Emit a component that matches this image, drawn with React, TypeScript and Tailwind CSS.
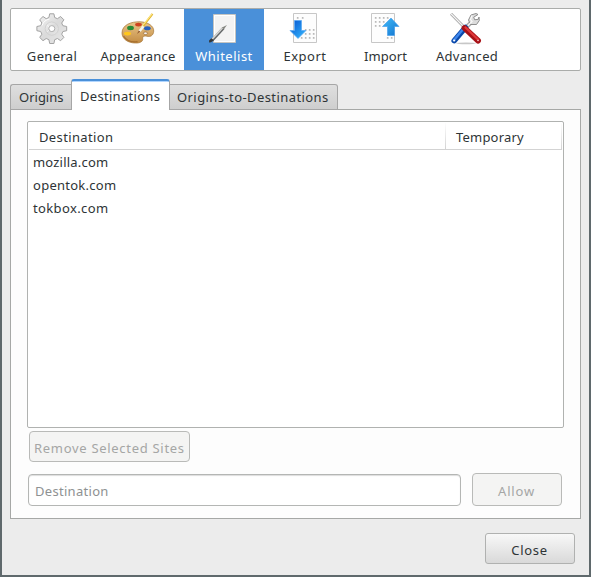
import type { ReactNode } from "react";

function GearIcon() {
  return (
    <svg className="-ml-px" width="32" height="32" viewBox="0 0 32 32">
      <defs>
        <linearGradient id="gear" x1="0" y1="0" x2="1" y2="1">
          <stop offset="0" stopColor="#f4f4f4" />
          <stop offset=".5" stopColor="#dadada" />
          <stop offset="1" stopColor="#e9e9e9" />
        </linearGradient>
      </defs>
      <g stroke="#a3a3a3" strokeWidth="1" fill="url(#gear)">
        <path
          strokeLinejoin="round"
          d="M13.7 .8h4.200l.8 3.700 2.700 1.200 3.200-2.200 3.300 3.300-2.200 3.200 1.200 2.700 3.800.8v4.200l-3.800.8-1.200 2.700 2.200 3.200-3.300 3.300-3.200-2.200-2.700 1.200-.8 3.800h-4.200l-.8-3.800-2.700-1.200-3.200 2.200-3.300-3.300 2.200-3.200-1.200-2.700-3.800-.8v-4.200l3.800-.8 1.200-2.700-2.200-3.200L7 3.500l3.200 2.200 2.700-1.200z"
        />
        <circle cx="15.800" cy="15.600" r="6.600" stroke="#cdcdcd" strokeWidth=".8" />
        <circle cx="15.800" cy="15.600" r="3" fill="#fff" stroke="#b0b0b0" />
      </g>
      <path d="M6 12.500q2-5.500 7.500-6.500M11.500 18.500l1.200-1M11.500 12.500l1.200 1" stroke="#fff" fill="none" />
    </svg>
  );
}

function PaletteIcon() {
  return (
    <svg width="34" height="32" viewBox="0 0 34 32">
      <defs>
        <linearGradient id="wood" x1="0" y1="0" x2="0" y2="1">
          <stop offset="0" stopColor="#e9c58a" />
          <stop offset="1" stopColor="#c38c43" />
        </linearGradient>
      </defs>
      <path
        d="M1 20C1 12 10 8.500 19 8.800c8 .2 14 4.200 13.700 9.400-.2 4-3 6-6.700 5-2.800-.7-4.800 0-4.300 2.300.5 3-2.700 4.700-7.200 4.500C7 30 1 26 1 20z"
        fill="url(#wood)"
        stroke="#a37131"
        strokeWidth=".7"
      />
      <path d="M2.500 23c3 4.500 8 6.500 14 5.500" stroke="#a56e2d" strokeWidth="1.200" fill="none" />
      <ellipse cx="17.500" cy="11.600" rx="3.400" ry="1.900" fill="#cf4220" />
      <ellipse cx="9.500" cy="15" rx="3.400" ry="2.200" fill="#268b34" />
      <ellipse cx="6.500" cy="20.600" rx="3.600" ry="1.900" fill="#ffc61c" />
      <ellipse cx="26.300" cy="15.200" rx="3.400" ry="2" fill="#285fbd" />
      <ellipse cx="24.500" cy="20.200" rx="2.200" ry="1.200" fill="#fff" stroke="#946127" strokeWidth=".7" />
      <path d="M21 14.500L31.500.8" stroke="#dfb22b" strokeWidth="2" />
      <path d="M20.500 14L31 .8" stroke="#ffe985" strokeWidth="1.100" />
      <path d="M21.500 12.500l2 1.600-4 5-2-1.500z" fill="#f3f3ed" />
      <path d="M17.800 17.400l1.500 1.200-3.300 2.400z" fill="#8f5932" />
    </svg>
  );
}

function WhitelistIcon() {
  return (
    <svg width="32" height="32" viewBox="0 0 32 32">
      <path d="M5.500 1.500h22v28h-22z" fill="#f3f3f3" stroke="#c5c5c2" />
      <path d="M6.500 2.500h20v26h-20z" fill="none" stroke="#fff" />
      <path d="M4 27.500L15.500 15" stroke="#626667" strokeWidth="2.800" />
      <path d="M3.800 26.500L15 14.500" stroke="#d5d5d3" strokeWidth="1.600" />
      <path d="M14 14.500l5-2.500-3.300 4.500z" fill="#858681" />
      <path d="M1 29.500l.2-2.200 2.300-2 2.300 2-2.800 2z" fill="#34383b" />
    </svg>
  );
}

const exportDots = [
  [8, 4], [13, 4],
  [8, 8],
  [16, 16], [20, 16], [24, 16],
  [16, 20], [20, 20], [24, 20],
  [12, 24], [16, 24], [20, 24], [24, 24],
];
const importDots = [
  [5, 4], [9, 4], [13, 4], [17, 4],
  [5, 8], [9, 8], [13, 8],
  [5, 12], [9, 12],
  [17, 24], [21, 24],
];

function TransferIcon({ down = false }: { down?: boolean }) {
  const left = down ? 4.5 : 1.5;
  return (
    <svg width="32" height="32" viewBox="0 0 32 32">
      <defs>
        <linearGradient id={down ? "blueDown" : "blueUp"} x1="0" y1="0" x2="1" y2="1">
          <stop offset="0" stopColor={down ? "#0753cf" : "#41bdf9"} />
          <stop offset="1" stopColor={down ? "#35bcff" : "#1273cf"} />
        </linearGradient>
      </defs>
      <path d={`M${left} .5h23v29h-23z`} fill="#fdfdfd" stroke="#c7c7c7" />
      {(down ? exportDots : importDots).map(([x, y]) => (
        <rect key={`${x}-${y}`} x={x - 0.2} y={y} width="1.800" height="1.800" rx=".6" fill="#b8b8b8" />
      ))}
      {down ? (
        <path d="M5.500 7.500h7v10h4.500L9 25.500 1 17.500h4.500z" fill="url(#blueDown)" stroke="#58a8f3" strokeWidth=".7" />
      ) : (
        <path d="M17.500 22.500V13.500h-5L21 5l8 8.500h-4.500v9z" fill="url(#blueUp)" stroke="#4aa0ed" strokeWidth=".7" />
      )}
    </svg>
  );
}

function ToolsIcon() {
  return (
    <svg className="-ml-[2px]" width="32" height="32" viewBox="0 0 32 32">
      <ellipse cx="16" cy="30.300" rx="10" ry=".9" fill="#c7c7c7" />
      <path d="M1 .8L15 15" stroke="#999" strokeWidth="2.700" />
      <path d="M1 .8L15 15" stroke="#f6f6f6" strokeWidth="1.300" />
      <path d="M16 14.500l6-6" stroke="#aaa" strokeWidth="4" />
      <path d="M20.500 11.500l-2-4.500L21 2l5-1.500 2 1-4.300 2.700 1 2.600 3.500-.5L29 4l.3 3.500-2.800 4z" fill="#dcdcdc" stroke="#858585" strokeWidth=".9" />
      <path d="M17 13.500l5-5M22 2.500l-1.500 4 2 2.500" stroke="#fafafa" strokeWidth="1.200" fill="none" />
      <path d="M4.200 27.700L15.500 14.500" stroke="#0a49aa" strokeWidth="5.500" strokeLinecap="round" />
      <path d="M3.800 27.200L14.500 14.500" stroke="#3e86ec" strokeWidth="2.400" strokeLinecap="round" />
      <path d="M14.500 15L28 27.700" stroke="#a81217" strokeWidth="5.800" strokeLinecap="round" />
      <path d="M15.500 14.500L28 26.500" stroke="#e0383a" strokeWidth="2.200" strokeLinecap="round" />
      <circle cx="4.200" cy="27.500" r="1.100" fill="#fff" />
      <circle cx="28" cy="27.500" r=".7" fill="#fff" />
    </svg>
  );
}

function ToolbarItem({ icon, label, className, labelClass }: { icon: ReactNode; label: string; className: string; labelClass: string }) {
  return (
    <button className={`flex h-[61px] shrink-0 flex-col items-center pt-1 ${className}`}>
      {icon}
      <span className={`mt-px h-5 leading-5 ${labelClass}`}>{label}</span>
    </button>
  );
}

const sites = [
  { name: "mozilla.com", spacing: "tracking-[0.2px]" },
  { name: "opentok.com", spacing: "tracking-[0.26px]" },
  { name: "tokbox.com", spacing: "tracking-[0.37px]" },
];

export default function App() {
  return (
    <div className="flex h-[577px] w-[591px] flex-col overflow-hidden whitespace-nowrap border-x-2 border-b-2 border-[#5f696c] bg-[#ececec] pl-2 pr-2 pt-2 font-['Noto_Sans',sans-serif] text-[13px] text-[#2e3436]">
      <nav className="flex h-[63px] w-[571px] shrink-0 rounded-[2px] border border-[#aaacaa] bg-white">
        <ToolbarItem icon={<GearIcon />} label="General" className="w-[81px] pl-px" labelClass="tracking-[0.35px]" />
        <ToolbarItem icon={<PaletteIcon />} label="Appearance" className="w-[92px]" labelClass="tracking-[0.2px]" />
        <ToolbarItem icon={<WhitelistIcon />} label="Whitelist" className="w-20 bg-[#4a90d9] text-white" labelClass="tracking-[0.5px]" />
        <ToolbarItem icon={<TransferIcon down />} label="Export" className="w-[82px]" labelClass="tracking-[0.5px]" />
        <ToolbarItem icon={<TransferIcon />} label="Import" className="w-[79px]" labelClass="tracking-[0.1px]" />
        <ToolbarItem icon={<ToolsIcon />} label="Advanced" className="w-[83px] pl-px" labelClass="tracking-[0.3px]" />
      </nav>

      <div className="z-10 mt-2 flex h-[31px] shrink-0 items-end">
        <button className="h-[26px] w-[61px] rounded-tl-[3px] border border-r-0 border-[#a6a6a6] bg-linear-to-b from-[#dfdfdf] to-[#cecece] pl-2 text-left leading-6">Origins</button>
        <button className="h-[31px] w-[99px] rounded-t-[3px] border-x border-t-2 border-x-[#a6a6a6] border-t-[#4a90d9] bg-linear-to-b from-[#88bffc] via-white via-5% to-white pl-2 text-left leading-[30px] tracking-[0.3px]">Destinations</button>
        <button className="h-[26px] w-[168px] rounded-tr-[3px] border border-l-0 border-[#a6a6a6] bg-linear-to-b from-[#dfdfdf] to-[#cecece] pl-[7px] text-left leading-6 tracking-[0.42px]">Origins-to-Destinations</button>
      </div>

      <main className="-mt-px flex h-[410px] w-[571px] shrink-0 flex-col border border-[#a6a8a6] bg-[#fdfdfd] px-4 pt-[11px]">
        <section className="h-[307px] w-[537px] shrink-0 rounded-[2px] border border-[#b0b2b0] bg-white px-px">
          <header className="flex h-7 border-b border-[#d3d3d3] leading-[31px]">
            <span className="w-[416px] pl-[10px] tracking-[0.37px]">Destination</span>
            <i className="w-px bg-linear-to-b from-white to-[#d3d3d3]" />
            <span className="w-[115px] pl-[10px] tracking-[0.2px]">Temporary</span>
            <i className="w-px bg-linear-to-b from-white to-[#d3d3d3]" />
          </header>
          <ul className="pl-1 pt-px">
            {sites.map((site) => (
              <li key={site.name} className={`h-[23px] leading-[23px] ${site.spacing}`}>{site.name}</li>
            ))}
          </ul>
        </section>
        <button className="ml-[2px] mt-[3px] h-[31px] w-[161px] shrink-0 rounded-[4px] border border-[#b9bab8] bg-[#f4f4f3] pl-1 pt-[2px] text-left leading-5 tracking-[0.7px] text-[#a5a6a5]">Remove Selected Sites</button>
        <div className="ml-px mt-[11px] flex h-[33px] w-[534px] shrink-0 items-end justify-between">
          <input placeholder="Destination" className="h-8 w-[433px] rounded-[4px] border border-[#b4b6b4] bg-white px-[6px] pt-px tracking-[0.3px] shadow-[inset_0_1px_1px_#ddd] placeholder:text-[#8e9192]" />
          <button className="h-[33px] w-[90px] rounded-[4px] border border-[#b9bab8] bg-[#f4f4f3] pr-px pt-[3px] leading-5 tracking-[0.8px] text-[#a5a6a5]">Allow</button>
        </div>
      </main>

      <footer className="flex justify-end pr-[6px] pt-[14px]">
        <button className="h-[31px] w-[90px] rounded-[3px] border border-[#b0b1b0] bg-linear-to-b from-[#f8f8f8] to-[#d9d9d9] pr-px pt-[2px] leading-5 tracking-[0.7px]">Close</button>
      </footer>
    </div>
  );
}
